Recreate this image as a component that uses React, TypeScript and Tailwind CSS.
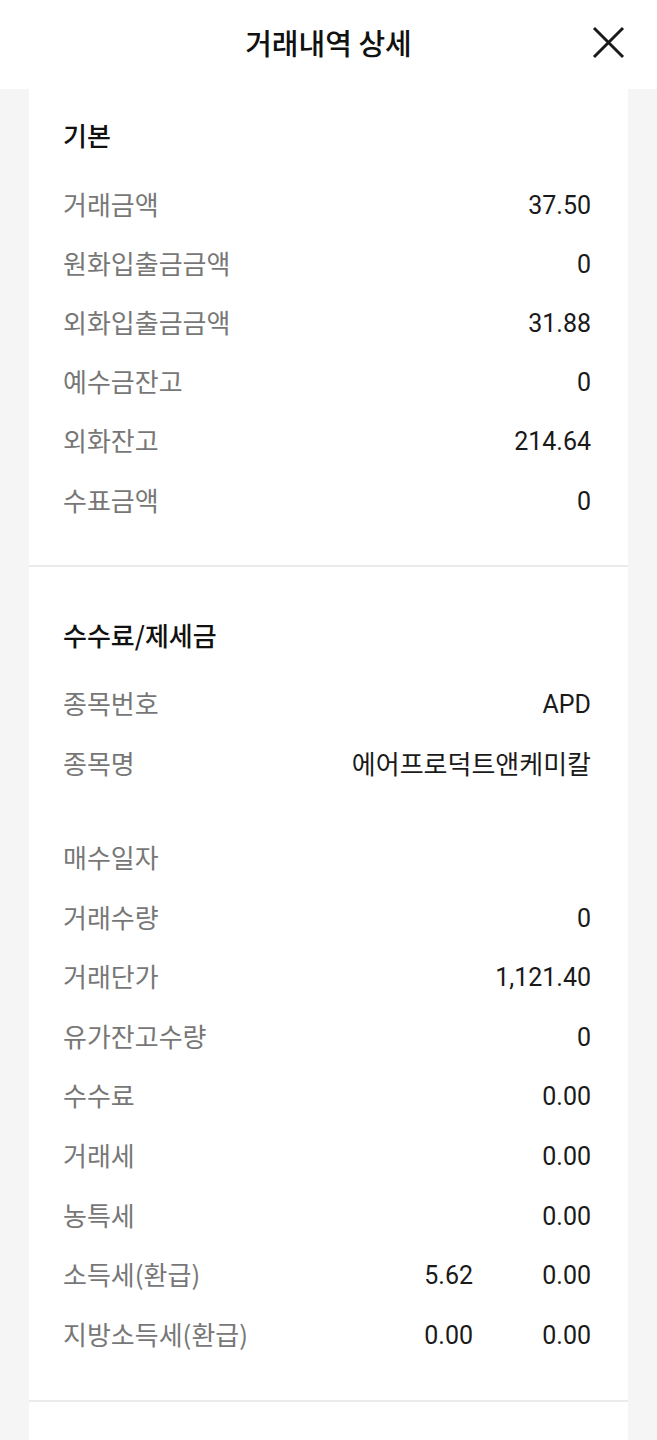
import React from "react";

type Row = { label: string; values: string[]; kr?: boolean; spacer?: boolean };

const basic: Row[] = [
  { label: "거래금액", values: ["37.50"] },
  { label: "원화입출금금액", values: ["0"] },
  { label: "외화입출금금액", values: ["31.88"] },
  { label: "예수금잔고", values: ["0"] },
  { label: "외화잔고", values: ["214.64"] },
  { label: "수표금액", values: ["0"] },
];

const fees: Row[] = [
  { label: "종목번호", values: ["APD"] },
  { label: "종목명", values: ["에어프로덕트앤케미칼"], kr: true, spacer: true },
  { label: "매수일자", values: [] },
  { label: "거래수량", values: ["0"] },
  { label: "거래단가", values: ["1,121.40"] },
  { label: "유가잔고수량", values: ["0"] },
  { label: "수수료", values: ["0.00"] },
  { label: "거래세", values: ["0.00"] },
  { label: "농특세", values: ["0.00"] },
  { label: "소득세(환급)", values: ["5.62", "0.00"] },
  { label: "지방소득세(환급)", values: ["0.00", "0.00"] },
];

function RowView({ row, tall }: { row: Row; tall: boolean }) {
  return (
    <>
      <div
        className={
          (tall ? "h-[59.6px] " : "h-[59.2px] ") +
          "flex items-center justify-between"
        }
      >
        <span className="font-['Noto_Sans_CJK_KR',sans-serif] text-[26px] leading-none text-[#777777] whitespace-nowrap">
          {row.label}
        </span>
        {row.values.length === 1 && (
          <span
            className={
              row.kr
                ? "font-['Noto_Sans_CJK_KR',sans-serif] text-[26px] leading-none text-[#1a1a1a] whitespace-nowrap"
                : "pt-[3px] font-['Roboto','Noto_Sans_CJK_KR',sans-serif] text-[25px] leading-none text-[#1a1a1a] whitespace-nowrap"
            }
          >
            {row.values[0]}
          </span>
        )}
        {row.values.length === 2 && (
          <div className="flex pt-[3px]">
            {row.values.map((v, i) => (
              <span
                key={i}
                className="w-[118px] text-right font-['Roboto','Noto_Sans_CJK_KR',sans-serif] text-[25px] leading-none text-[#1a1a1a]"
              >
                {v}
              </span>
            ))}
          </div>
        )}
      </div>
      {row.spacer && <div className="h-[35px]" />}
    </>
  );
}

export default function App() {
  return (
    <div className="w-[657px] h-[1440px] overflow-hidden bg-[#f5f5f5] font-['Noto_Sans_CJK_KR',sans-serif]">
      {/* Header */}
      <header className="h-[89px] bg-white grid grid-cols-[1fr_auto_1fr] items-center pb-[5px]">
        <div />
        <h1 className="text-[29px] font-medium leading-none text-[#111111] whitespace-nowrap">
          거래내역 상세
        </h1>
        <div className="flex justify-end pr-[32px]">
          <svg width="33" height="33" viewBox="0 0 33 33" fill="none">
            <path
              d="M2 2 L31 31 M31 2 L2 31"
              stroke="#1a1a1a"
              strokeWidth="3"
              strokeLinecap="butt"
            />
          </svg>
        </div>
      </header>

      {/* Card 1 */}
      <section className="mx-[29px] bg-white pt-[29px] pb-[36px] pl-[34px] pr-[37px]">
        <h2 className="h-[34px] mb-[22px] flex items-center text-[26px] font-medium leading-none text-[#111111]">
          기본
        </h2>
        {basic.map((r, i) => (
          <RowView key={i} row={r} tall={false} />
        ))}
      </section>
      <div className="mx-[29px] h-[2px] bg-[#ebebeb]" />

      {/* Card 2 */}
      <section className="mx-[29px] bg-white pt-[51px] pb-[36px] pl-[34px] pr-[37px]">
        <h2 className="h-[34px] mb-[21px] flex items-center text-[26px] font-medium leading-none text-[#111111]">
          수수료/제세금
        </h2>
        {fees.map((r, i) => (
          <RowView key={i} row={r} tall={true} />
        ))}
      </section>
      <div className="mx-[29px] h-[2px] bg-[#ebebeb]" />

      {/* Card 3 (partially visible) */}
      <section className="mx-[29px] h-[200px] bg-white" />
    </div>
  );
}
